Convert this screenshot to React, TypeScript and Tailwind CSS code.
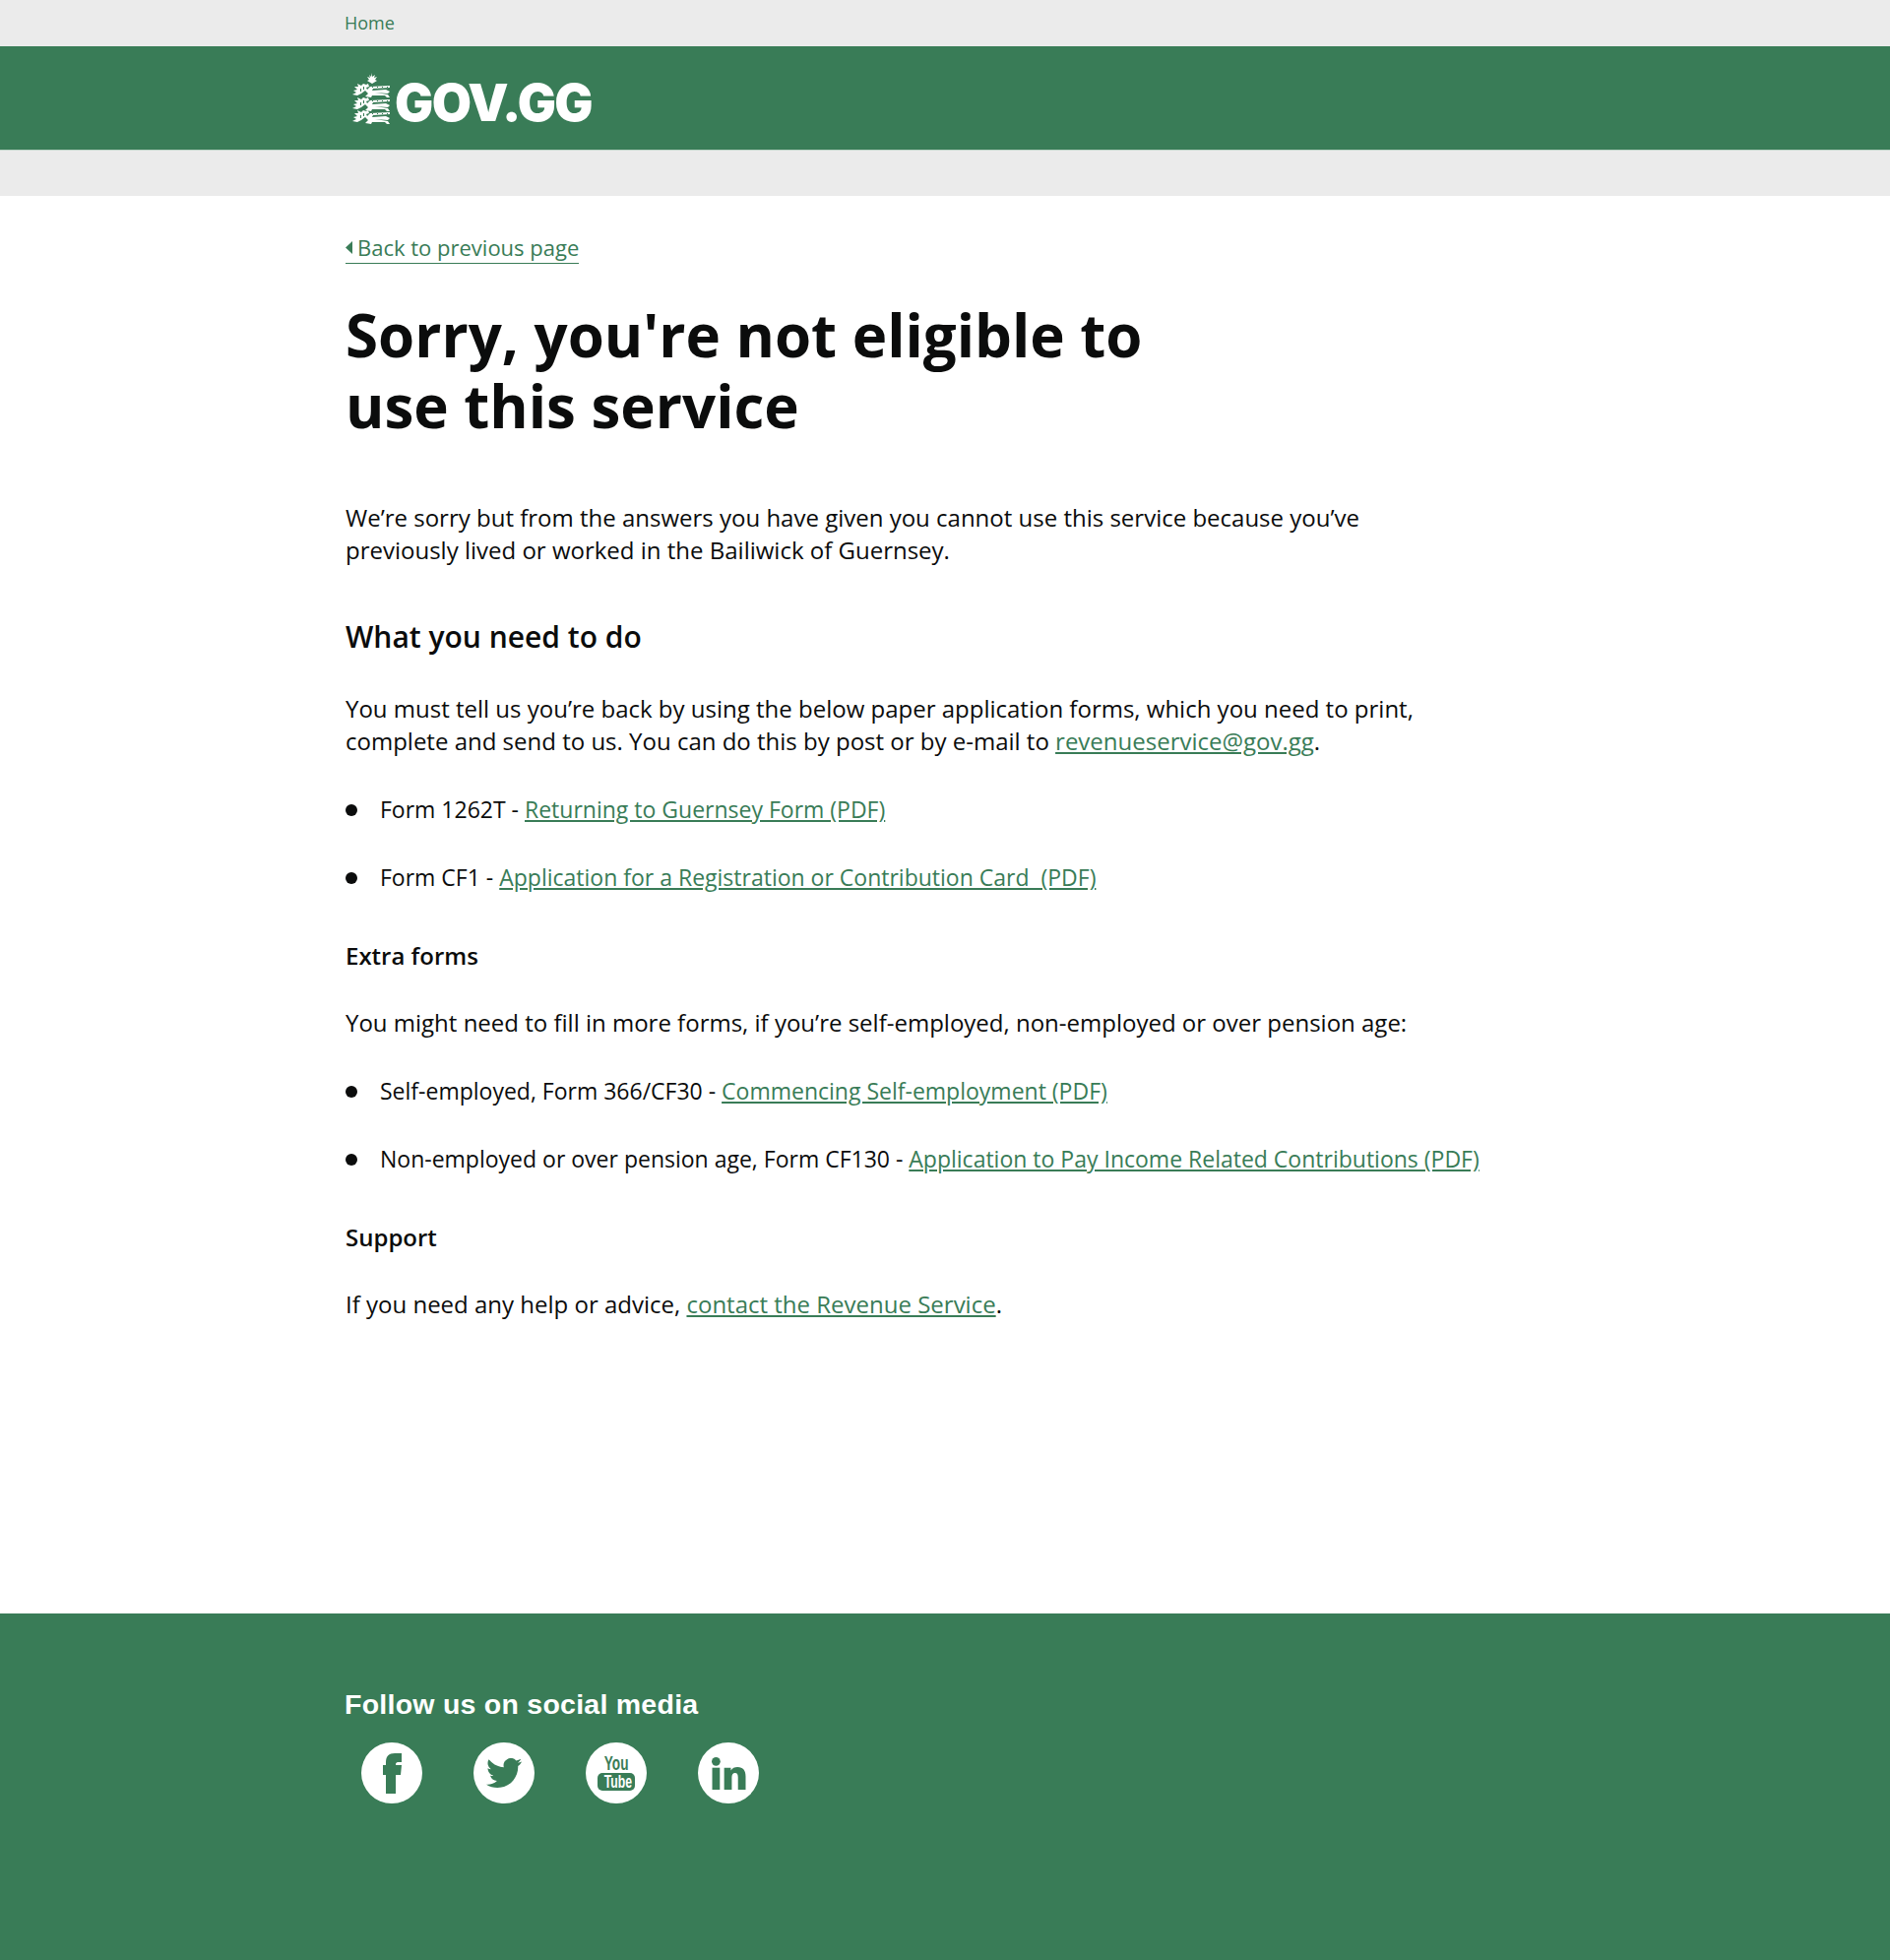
import React from "react";

const G = "#397c57";

function Crest() {
  const lion = (y: number) => (
    <g key={y} transform={`translate(0 ${y})`} fill="#fff">
      <path d="M0 11 L4 9 L1 7 L5 6 L2 3 L6 3 L5 0 L9 2 L11 0 L14 1 L16 0 L17 3 L14 4 L15 6 L18 3 L38 2 L38 4 L21 5 L20 7 L34 6 L38 8 L36 10 L23 9 L36 11 L38 14 L35 14 L33 12 L20 12 L19 14 L13 13 L16 10 L13 7 L9 10 L5 12 Z" />
      <rect x="20" y="3" width="1" height="1" fill={G} />
      <rect x="25" y="3" width="1" height="1" fill={G} />
      <rect x="30" y="3" width="1" height="1" fill={G} />
      <rect x="35" y="3" width="1" height="1" fill={G} />
      <rect x="8" y="5" width="1" height="3" fill={G} />
      <rect x="11" y="3" width="1" height="3" fill={G} />
    </g>
  );
  return (
    <svg width="39" height="52" viewBox="0 0 39 52" className="shrink-0">
      <path d="M19 0 L20 4 L23 2 L22 5 L25 4 L23 7 L25 8 L20 11 L15 8 L17 7 L15 4 L18 5 L17 2 L19 4 Z" fill="#fff" />
      {lion(11)}
      {lion(25)}
      {lion(38)}
    </svg>
  );
}

function Circle({ children }: { children: React.ReactNode }) {
  return <div className="w-[62px] h-[62px] rounded-full bg-white flex items-center justify-center shrink-0">{children}</div>;
}

function Bullet({ children }: { children: React.ReactNode }) {
  return (
    <li className="flex items-center h-[33px] mb-[36px] text-[23px]">
      <span className="w-[12px] h-[12px] rounded-full bg-[#0b0c0c] mr-[23px] mt-[1px] shrink-0" />
      <span>{children}</span>
    </li>
  );
}

function L({ children }: { children: React.ReactNode }) {
  return <a className="text-[#397c57] underline" href="#">{children}</a>;
}

export default function App() {
  return (
    <div className="w-[1920px] h-[1991px] flex flex-col bg-white text-[#0b0c0c] font-['Open_Sans',sans-serif]">
      <div className="h-[47px] bg-[#ebebeb] pl-[350px] flex items-center shrink-0">
        <a className="text-[18px] text-[#397c57]" href="#">Home</a>
      </div>
      <div className="h-[106px] bg-[#397c57] pl-[358px] flex items-center shrink-0 border-b border-white/70">
        <Crest />
        <span className="font-['Inter',sans-serif] font-black text-[52px] leading-none text-white ml-[4px] tracking-[-1.500px] mt-[10px]">GOV.GG</span>
      </div>
      <div className="h-[46px] bg-[#ebebeb] shrink-0" />

      <main className="flex-1 pl-[351px] text-[24px] leading-[33px]">
        <a className="flex w-fit items-center mt-[36px] h-[33px] text-[22px] text-[#397c57] border-b border-[#397c57] leading-[32px]" href="#">
          <svg width="7" height="13" viewBox="0 0 7 13" className="shrink-0 mr-[5px]"><path d="M7 0V13L0 6.500Z" fill={G} /></svg>
          Back to previous page
        </a>
        <h1 className="mt-[36px] w-[900px] text-[60px] leading-[72px] font-bold">Sorry, you're not eligible to use this service</h1>
        <p className="mt-[61px] w-[1100px]">We’re sorry but from the answers you have given you cannot use this service because you’ve previously lived or worked in the Bailiwick of Guernsey.</p>
        <h2 className="mt-[52px] text-[30px] leading-[40px] font-semibold">What you need to do</h2>
        <p className="mt-[36px] w-[1120px]">You must tell us you’re back by using the below paper application forms, which you need to print, complete and send to us. You can do this by post or by e-mail to <L>revenueservice@gov.gg</L>.</p>
        <ul className="mt-[37px]">
          <Bullet>Form 1262T - <L>Returning to Guernsey Form (PDF)</L></Bullet>
          <Bullet>Form CF1 - <L>Application for a Registration or Contribution Card &nbsp;(PDF)</L></Bullet>
        </ul>
        <h3 className="mt-[46px] text-[24px] leading-[33px] font-semibold">Extra forms</h3>
        <p className="mt-[35px]">You might need to fill in more forms, if you’re self-employed, non-employed or over pension age:</p>
        <ul className="mt-[37px]">
          <Bullet>Self-employed, Form 366/CF30 - <L>Commencing Self-employment (PDF)</L></Bullet>
          <Bullet>Non-employed or over pension age, Form CF130 - <L>Application to Pay Income Related Contributions (PDF)</L></Bullet>
        </ul>
        <h3 className="mt-[46px] text-[24px] leading-[33px] font-semibold">Support</h3>
        <p className="mt-[35px]">If you need any help or advice, <L>contact the Revenue Service</L>.</p>
      </main>

      <footer className="h-[352px] bg-[#397c57] pl-[350px] pt-[75px] shrink-0 text-white">
        <h2 className="font-['Liberation_Sans',sans-serif] font-bold text-[28.500px] tracking-[0.250px] leading-[34px]">Follow us on social media</h2>
        <div className="flex gap-[52px] pl-[17px] mt-[22px]">
          <Circle>
            <svg width="19" height="41" viewBox="0 0 19 41"><path fill={G} d="M3 41V22H0V12H3V9C3 3 6 0 12 0H19V9H15C14 9 13 10 13 11V12H19L18 22H13V41Z" /></svg>
          </Circle>
          <Circle>
            <svg width="36" height="30" viewBox="0 0 24 20"><path fill={G} d="M24 2.4c-.9.4-1.8.7-2.8.8 1-.6 1.8-1.6 2.2-2.7-1 .6-2 1-3.100 1.200A4.900 4.900 0 0 0 11.900 6.200C7.800 6 4.200 4 1.700.900A4.900 4.900 0 0 0 3.200 7.500c-.8 0-1.600-.2-2.200-.6 0 2.400 1.700 4.400 3.900 4.900-.7.200-1.500.2-2.200.1.600 2 2.400 3.400 4.600 3.400A9.900 9.900 0 0 1 0 17.800 14 14 0 0 0 7.500 20c9.100 0 14.300-7.700 14-14.600 1-.7 1.800-1.600 2.500-3z" /></svg>
          </Circle>
          <Circle>
            <div className="flex flex-col items-center text-[#397c57] font-['Liberation_Sans',sans-serif] font-bold leading-none">
              <span className="text-[20px] scale-x-[0.68] leading-[17px]">You</span>
              <span className="bg-[#397c57] text-white rounded-[5px] w-[38px] h-[18px] text-[18px] leading-[18px] text-center mt-[1px]"><span className="inline-block scale-x-[0.68]">Tube</span></span>
            </div>
          </Circle>
          <Circle>
            <svg width="35" height="33" viewBox="0 0 36 34"><g fill={G}><circle cx="4.500" cy="4.500" r="4.500" /><rect x="0.500" y="11" width="8" height="23" /><path d="M13 11h7v3c1.500-2.500 4-3.600 7-3.600 6 0 8.500 4 8.500 9.600v14h-8V21c0-3-1-4.500-3-4.500-2.500 0-3.500 2-3.500 4.500v13h-8z" /></g></svg>
          </Circle>
        </div>
      </footer>
    </div>
  );
}
